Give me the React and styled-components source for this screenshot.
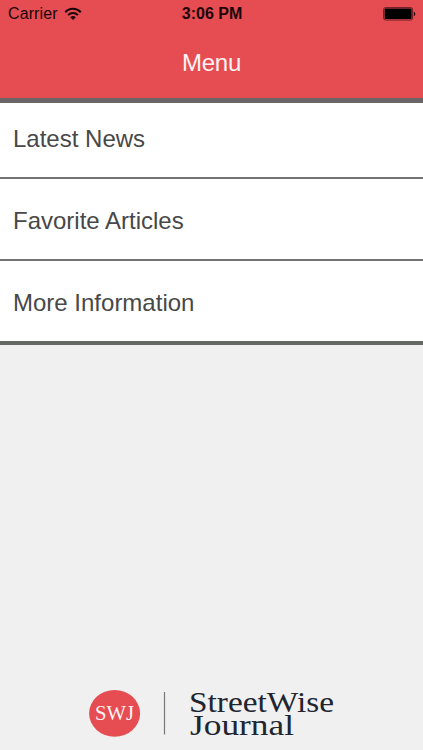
import React from 'react';
import styled, { createGlobalStyle } from 'styled-components';

const GlobalStyle = createGlobalStyle`
  * { box-sizing: border-box; }
  body {
    margin: 0;
    background: #f0f0f0;
    font-family: "Liberation Sans", Helvetica, Arial, sans-serif;
  }
`;

const Screen = styled.div`
  display: flex;
  flex-direction: column;
  height: 750px;
  overflow: hidden;
  background: #f0f0f0;
`;

const Header = styled.header`
  height: 103px;
  background: #e54d53;
  border-bottom: 5px solid #6b6567;
`;

const StatusBar = styled.div`
  display: grid;
  grid-template-columns: 1fr auto 1fr;
  align-items: center;
  height: 28px;
  padding: 0 7px 0 8px;
  color: #1c0506;
`;

const Carrier = styled.span`
  display: flex;
  align-items: center;
  gap: 6px;
  font-size: 16px;
  letter-spacing: 0.1px;
`;

const Clock = styled.span`
  font-size: 16px;
  font-weight: 700;
`;

const BatteryIcon = styled.svg`
  justify-self: end;
`;

const Title = styled.h1`
  margin: 0;
  padding-top: 20px;
  color: #fff4f2;
  font-size: 24px;
  font-weight: 400;
  line-height: 30px;
  letter-spacing: -0.2px;
  text-align: center;
`;

const MenuList = styled.nav`
  display: flex;
  flex-direction: column;
  background: #fff;
  border-bottom: 4px solid #666866;
`;

const MenuItem = styled.a`
  display: flex;
  align-items: center;
  height: ${({ $height }) => $height}px;
  padding: ${({ $top }) => $top}px 0 ${({ $bottom }) => $bottom}px 13px;
  color: #484848;
  font-size: 24px;
  line-height: 28px;
  & + & { border-top: 2px solid #737373; }
`;

const Footer = styled.footer`
  display: flex;
  align-items: flex-start;
  height: 75px;
  margin-top: auto;
  padding-left: 88px;
`;

const items = [
  { label: 'Latest News', height: 74, top: 0, bottom: 2 },
  { label: 'Favorite Articles', height: 82, top: 3, bottom: 0 },
  { label: 'More Information', height: 82, top: 3, bottom: 0 },
];

function Wifi() {
  return (
    <svg width="18" height="14" viewBox="0 0 18 14" fill="none" stroke="currentColor" strokeWidth="2">
      <path d="M1.2 5.2C5.5.6 12.5.6 16.8 5.2" />
      <path d="M4.1 8.1c2.7-2.9 7.1-2.9 9.8 0" />
      <path d="M6.2 10.2c1.6-1.7 4-1.7 5.6 0L9 13.1Z" fill="currentColor" stroke="none" />
    </svg>
  );
}

function Battery() {
  return (
    <BatteryIcon width="33" height="14" viewBox="0 0 33 14">
      <rect x="0.6" y="0.6" width="29" height="12.4" rx="1.8" fill="none" stroke="#6b1f22" strokeWidth="1" />
      <rect x="1.6" y="1.6" width="27" height="10.4" rx="0.8" fill="#000" />
      <path d="M30.8 4.7c2 .7 2 3.7 0 4.4Z" fill="#240607" />
    </BatteryIcon>
  );
}

function Logo() {
  return (
    <svg width="250" height="75" viewBox="88 675 250 75" fontFamily='"Liberation Serif", "Times New Roman", serif'>
      <ellipse cx="114.6" cy="713.4" rx="25.5" ry="23.4" fill="#e54d53" />
      <text x="95" y="720" fontSize="20" fill="#fff4f2" textLength="39" lengthAdjust="spacingAndGlyphs">SWJ</text>
      <path d="M164.5 692v42.5" stroke="#777" strokeWidth="1.2" />
      <g fill="#202530">
        <text x="189" y="712" fontSize="28.5" textLength="145" lengthAdjust="spacingAndGlyphs">StreetWise</text>
        <text x="190" y="735" fontSize="28.5" textLength="104" lengthAdjust="spacingAndGlyphs">Journal</text>
      </g>
    </svg>
  );
}

export default function App() {
  return (
    <Screen>
      <GlobalStyle />
      <Header>
        <StatusBar>
          <Carrier>Carrier <Wifi /></Carrier>
          <Clock>3:06 PM</Clock>
          <Battery />
        </StatusBar>
        <Title>Menu</Title>
      </Header>
      <MenuList>
        {items.map(({ label, height, top, bottom }) => (
          <MenuItem key={label} $height={height} $top={top} $bottom={bottom}>{label}</MenuItem>
        ))}
      </MenuList>
      <Footer><Logo /></Footer>
    </Screen>
  );
}
